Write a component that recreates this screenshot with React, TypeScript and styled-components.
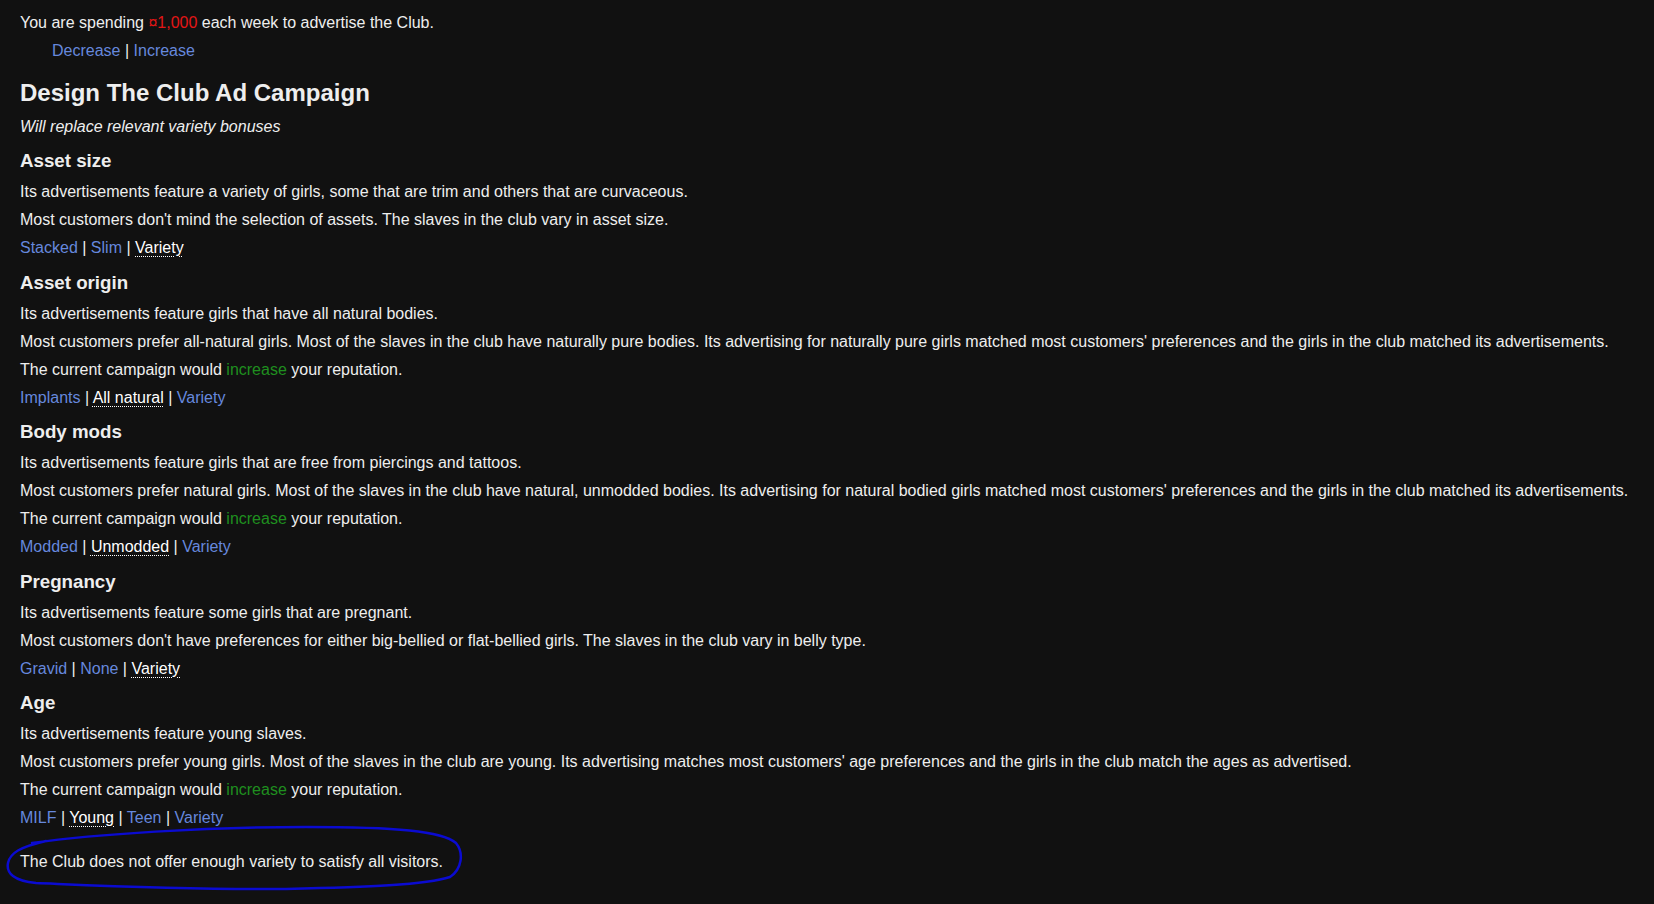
import React from "react"
import styled, { createGlobalStyle } from "styled-components"

const GlobalStyle = createGlobalStyle`
    html, body {
        margin: 0;
        background-color: #111111;
    }
    body {
        font-family: "Liberation Sans", Arial, Helvetica, sans-serif;
        font-size: 16px;
        color: #eeeeee;
    }
`

const Page = styled.div`
    padding: 9px 20px 20px 20px;
    line-height: 28px;
    min-height: 875px;
    box-sizing: border-box;
`

const Line = styled.div``

const Indent = styled.div`
    margin-left: 32px;
`

const Title = styled.h1`
    font-size: 24px;
    font-weight: bold;
    line-height: 32px;
    margin: 12px 0 4px 0;
`

const Note = styled.div`
    font-style: italic;
`

const SectionTitle = styled.h3`
    font-size: 18.72px;
    font-weight: bold;
    line-height: 28px;
    margin: 6px 0 3px 0;
`

const Section = styled.section`
    & + & ${SectionTitle} {
        margin-top: 6.5px;
    }
`

const Cash = styled.span`
    color: #e41616;
`

const Good = styled.span`
    color: #1f8f1f;
`

const Link = styled.a`
    color: #6688dd;
    text-decoration: none;
    cursor: pointer;
`

const Chosen = styled.span`
    color: #ffffff;
    text-decoration: underline dotted 1px;
    text-underline-offset: 3px;
`

const Footer = styled.div`
    position: relative;
    margin-top: 16px;
    display: inline-block;
`

const Scribble = styled.svg`
    position: absolute;
    left: -14px;
    top: -23px;
    pointer-events: none;
    overflow: visible;
`

interface SectionData {
    title: string
    lines: React.ReactNode[]
    options: string[]
    chosen: string
}

const increase = (
    <>The current campaign would <Good>increase</Good> your reputation.</>
)

const sections: SectionData[] = [
    {
        title: "Asset size",
        lines: [
            "Its advertisements feature a variety of girls, some that are trim and others that are curvaceous.",
            "Most customers don't mind the selection of assets. The slaves in the club vary in asset size.",
        ],
        options: ["Stacked", "Slim", "Variety"],
        chosen: "Variety",
    },
    {
        title: "Asset origin",
        lines: [
            "Its advertisements feature girls that have all natural bodies.",
            "Most customers prefer all-natural girls. Most of the slaves in the club have naturally pure bodies. Its advertising for naturally pure girls matched most customers' preferences and the girls in the club matched its advertisements.",
            increase,
        ],
        options: ["Implants", "All natural", "Variety"],
        chosen: "All natural",
    },
    {
        title: "Body mods",
        lines: [
            "Its advertisements feature girls that are free from piercings and tattoos.",
            "Most customers prefer natural girls. Most of the slaves in the club have natural, unmodded bodies. Its advertising for natural bodied girls matched most customers' preferences and the girls in the club matched its advertisements.",
            increase,
        ],
        options: ["Modded", "Unmodded", "Variety"],
        chosen: "Unmodded",
    },
    {
        title: "Pregnancy",
        lines: [
            "Its advertisements feature some girls that are pregnant.",
            "Most customers don't have preferences for either big-bellied or flat-bellied girls. The slaves in the club vary in belly type.",
        ],
        options: ["Gravid", "None", "Variety"],
        chosen: "Variety",
    },
    {
        title: "Age",
        lines: [
            "Its advertisements feature young slaves.",
            "Most customers prefer young girls. Most of the slaves in the club are young. Its advertising matches most customers' age preferences and the girls in the club match the ages as advertised.",
            increase,
        ],
        options: ["MILF", "Young", "Teen", "Variety"],
        chosen: "Young",
    },
]

function Choices(props: { options: string[]; chosen: string }) {
    return (
        <Line>
            {props.options.map((opt, i) => (
                <React.Fragment key={opt}>
                    {i > 0 && " | "}
                    {opt === props.chosen ? <Chosen>{opt}</Chosen> : <Link>{opt}</Link>}
                </React.Fragment>
            ))}
        </Line>
    )
}

export default function App() {
    return (
        <>
        <GlobalStyle />
        <Page>
            <Line>
                You are spending <Cash>¤1,000</Cash> each week to advertise the Club.
            </Line>
            <Indent>
                <Link>Decrease</Link> | <Link>Increase</Link>
            </Indent>
            <Title>Design The Club Ad Campaign</Title>
            <Note>Will replace relevant variety bonuses</Note>
            {sections.map((s) => (
                <Section key={s.title}>
                    <SectionTitle>{s.title}</SectionTitle>
                    {s.lines.map((l, i) => (
                        <Line key={i}>{l}</Line>
                    ))}
                    <Choices options={s.options} chosen={s.chosen} />
                </Section>
            ))}
            <Footer>
                The Club does not offer enough variety to satisfy all visitors.
                <Scribble width="470" height="72" viewBox="0 0 470 72">
                    <path
                        d="M 26 18 C 90 9, 200 2, 300 2 C 390 2, 436 6, 450 18 C 458 28, 456 44, 444 52 C 420 60, 360 62, 280 64 C 180 65, 80 60, 30 58 C 8 56, 0 48, 2 38 C 4 28, 14 22, 40 16"
                        fill="none"
                        stroke="#0b0bd0"
                        strokeWidth="2.5"
                        strokeLinecap="round"
                    />
                </Scribble>
            </Footer>
        </Page>
        </>
    )
}
